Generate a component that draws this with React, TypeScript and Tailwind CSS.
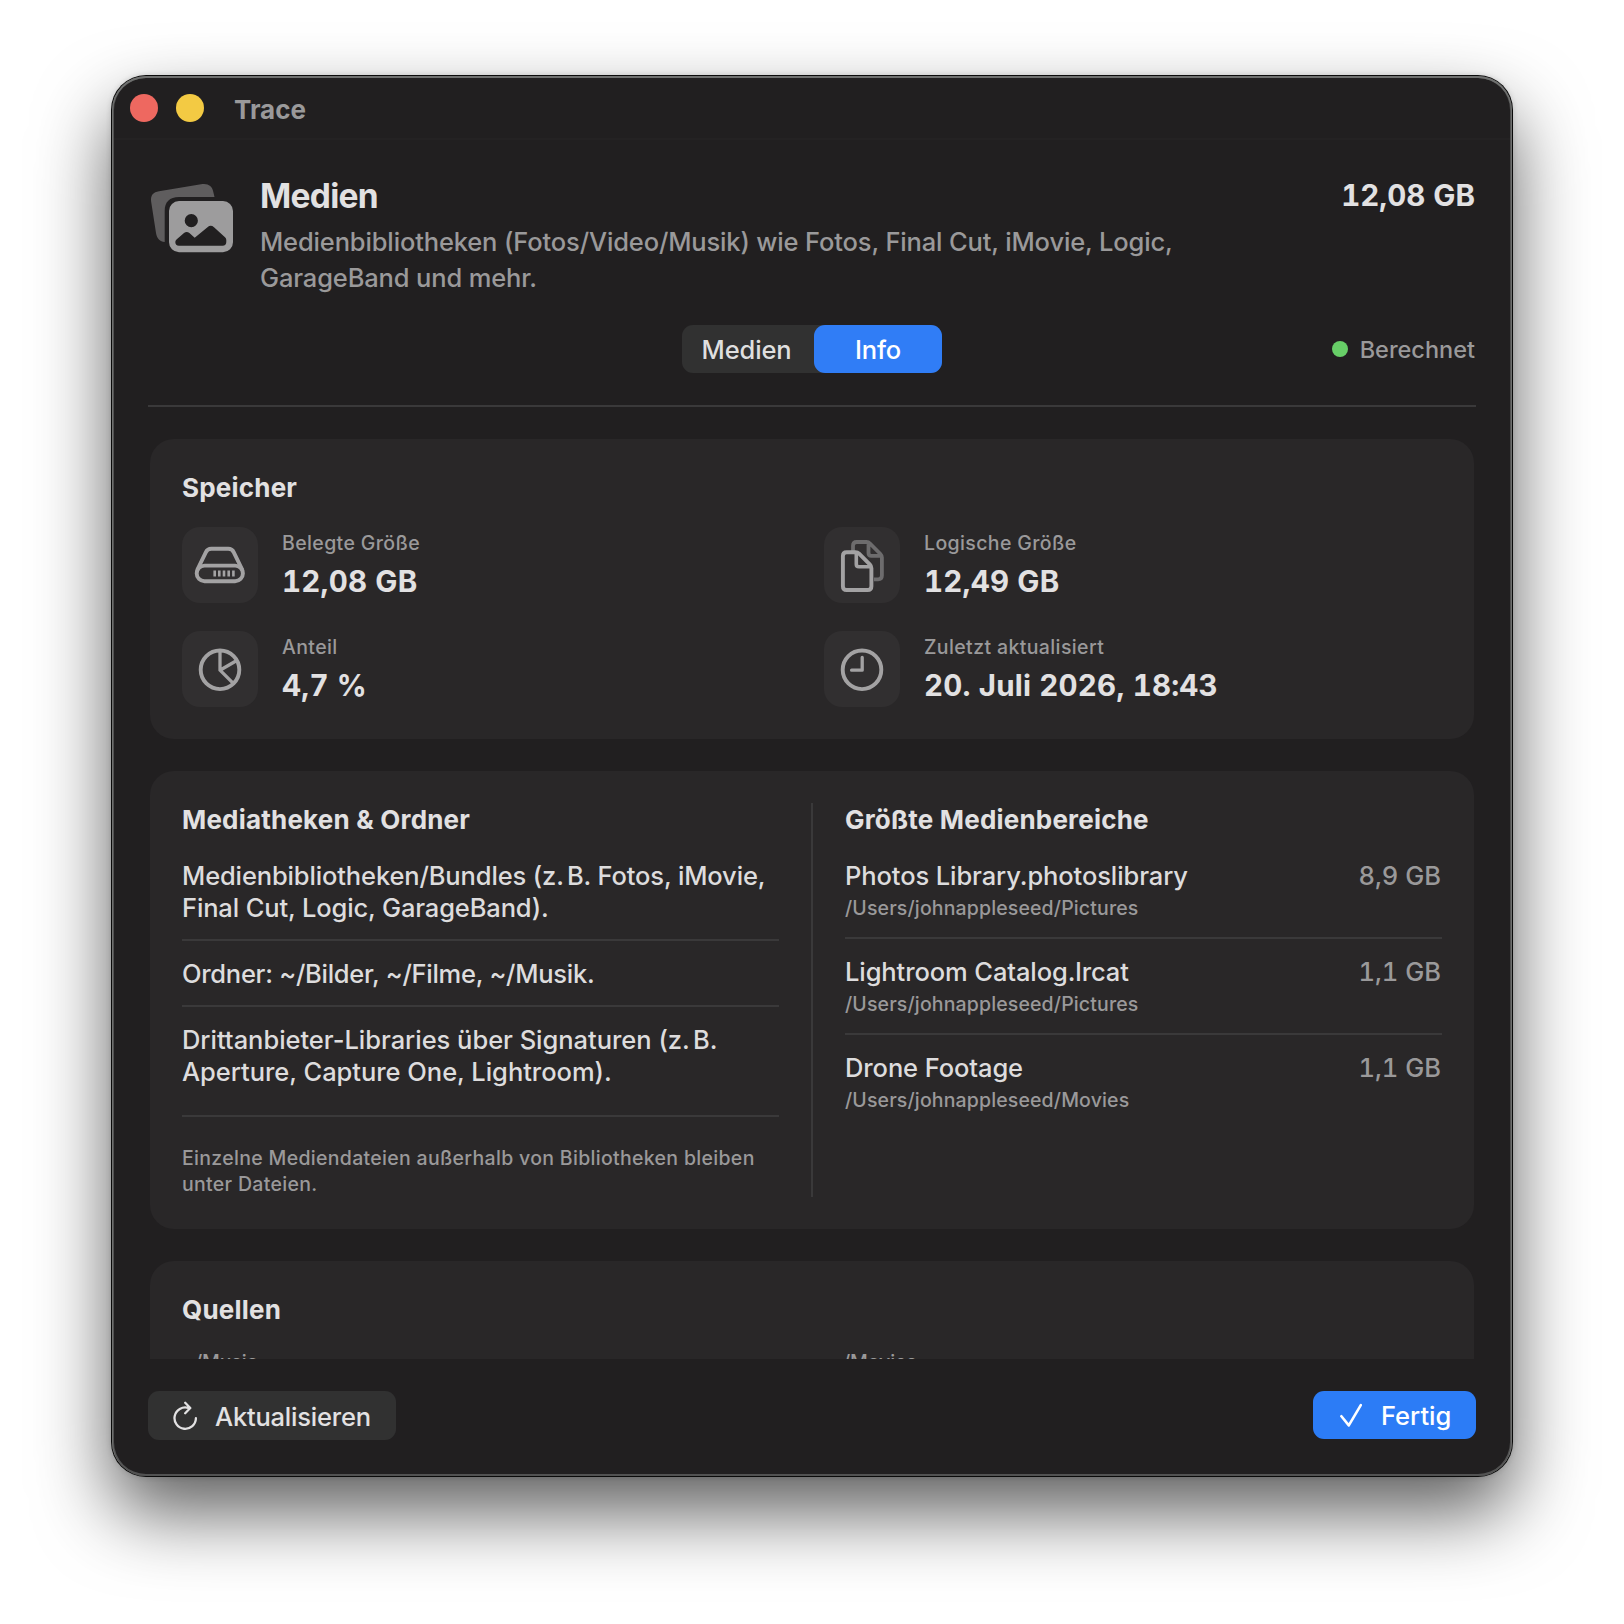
import type { ReactNode } from "react";

const titleStyles =
  "text-[26px] leading-8 font-bold tracking-[0.2px] text-[#e2e1e2] pt-px -mb-px";
const captionStyles = "text-[19.5px] leading-[26px] font-[450] text-[#9a999a]";

const PhotosIcon = () => (
  <svg width="92" height="76" viewBox="0 0 92 76" fill="none">
    <path
      d="M16.7 62C12 61.5 8.9 58.5 8 53L3.2 22C2.2 15 5.5 12 11 11.2L53 4.3C60 3 64 6 65.2 11.5L66.5 17H31C21.5 17 16.7 22 16.7 31Z"
      fill="#5f5d5e"
    />
    <path
      fillRule="evenodd"
      d="M31 21H75A10 10 0 0 1 85 31V62.3A10 10 0 0 1 75 72.3H31A10 10 0 0 1 21 62.3V31A10 10 0 0 1 31 21ZM43.3 34.1A6.6 6.6 0 1 0 43.3 47.3A6.6 6.6 0 1 0 43.3 34.1ZM31 65.7H74.5Q78.3 65.7 78.3 62V60Q78.3 58.5 77 57.2L66 47.2Q62.7 44.5 59.5 47.2L46.7 57.7L41.4 53Q38.7 50.8 36 53L28.5 59.4Q27.3 60.5 27.3 62Q27.3 65.7 31 65.7Z"
      fill="#9d9c9d"
    />
  </svg>
);

const DriveIcon = () => (
  <svg width="76" height="76" viewBox="0 0 76 76" fill="none" stroke="#a3a2a3">
    <rect x="14.7" y="38.6" width="46.2" height="15.6" rx="7.8" strokeWidth="3.9" />
    <path
      d="M15.2 43L23.8 25.3Q25.5 21.8 29.3 21.8H46.3Q50.1 21.8 51.8 25.3L60.4 43"
      strokeWidth="3.9"
    />
    <path
      d="M32.7 43.4V49.4M37.3 43.4V49.4M42 43.4V49.4M46.7 43.4V49.4M51.4 43.4V49.4"
      strokeWidth="2.6"
    />
  </svg>
);

const PieIcon = () => (
  <svg width="76" height="76" viewBox="0 0 76 76" fill="none" stroke="#a3a2a3" strokeWidth="3.9">
    <circle cx="38" cy="38.8" r="19.3" />
    <path d="M38 19.5V39.2L51.5 52.6M38 39.2L54.8 29.5" strokeWidth="3.3" strokeLinejoin="round" />
  </svg>
);

const DocsIcon = () => (
  <svg width="76" height="76" viewBox="0 0 76 76" fill="none" strokeLinejoin="round">
    <path
      d="M29 24V18.8Q29 15 32.7 15H42.5Q44.5 15 46 16.5L56.4 27Q57.9 28.5 57.9 30.6V48.5Q57.9 52.3 54.1 52.3H50M44.5 15.5V26Q44.5 28.9 47.4 28.9H57.5"
      stroke="#6d6c6d"
      strokeWidth="3.8"
    />
    <path
      d="M22.6 25.2H31.5Q33.6 25.2 35.1 26.7L46 37.6Q47.4 39 47.4 41.2V59.2Q47.4 63 43.6 63H22.6Q18.9 63 18.9 59.2V29Q18.9 25.2 22.6 25.2Z"
      stroke="#a3a2a3"
      strokeWidth="3.9"
    />
    <path d="M32.3 26V37.2Q32.3 39.8 34.9 39.8H46.5" stroke="#a3a2a3" strokeWidth="3.6" />
  </svg>
);

const ClockIcon = () => (
  <svg
    width="76"
    height="76"
    viewBox="0 0 76 76"
    fill="none"
    stroke="#a3a2a3"
    strokeLinecap="round"
    strokeLinejoin="round"
  >
    <circle cx="38" cy="38.8" r="19.3" strokeWidth="3.9" />
    <path d="M38.2 26.5V39.2H27.6" strokeWidth="3.3" />
  </svg>
);

const stats = [
  { label: "Belegte Größe", value: "12,08 GB", icon: <DriveIcon /> },
  { label: "Logische Größe", value: "12,49 GB", icon: <DocsIcon /> },
  { label: "Anteil", value: "4,7 %", icon: <PieIcon /> },
  { label: "Zuletzt aktualisiert", value: "20. Juli 2026, 18:43", icon: <ClockIcon /> },
];

const areas = [
  { name: "Photos Library.photoslibrary", path: "/Users/johnappleseed/Pictures", size: "8,9 GB" },
  { name: "Lightroom Catalog.lrcat", path: "/Users/johnappleseed/Pictures", size: "1,1 GB" },
  { name: "Drone Footage", path: "/Users/johnappleseed/Movies", size: "1,1 GB" },
];

const Card = ({ children }: { children: ReactNode }) => (
  <section className="shrink-0 rounded-[24px] bg-[#292728] p-8">{children}</section>
);

const Divider = () => <div className="h-0.5 w-full bg-[#3a393a]" />;

function Header() {
  return (
    <header className="flex items-start">
      <div className="mt-1 w-28 shrink-0">
        <PhotosIcon />
      </div>
      <div className="flex-1">
        <h1 className="text-[33.5px] leading-10 font-bold tracking-[-0.7px] text-[#e2e1e2]">
          Medien
        </h1>
        <p className="mt-2 text-[25.5px] leading-9 font-[450] tracking-[-0.15px] text-[#9a999a]">
          Medienbibliotheken (Fotos/Video/Musik) wie Fotos, Final Cut, iMovie, Logic,
          <br />
          GarageBand und mehr.
        </p>
      </div>
      <p className="pr-px text-[29.5px] leading-[38px] font-bold tabular-nums text-[#e2e1e2]">
        12,08 GB
      </p>
    </header>
  );
}

function Toolbar() {
  return (
    <div className="mt-[29px] grid grid-cols-[1fr_auto_1fr] items-center">
      <div />
      <div className="flex h-12 rounded-[11px] bg-[#313131] text-[25.5px] leading-[48px] font-[450] tracking-[-0.15px]">
        <button className="w-[132px] pt-0.5 pr-[3px] text-center leading-[46px] text-[#dfdfdf]">
          Medien
        </button>
        <button className="w-32 rounded-[11px] bg-[#307df6] pt-0.5 text-center leading-[46px] text-white">
          Info
        </button>
      </div>
      <div className="flex items-center justify-end gap-3 pr-px text-[23.5px] leading-8 font-[450] text-[#9a999a]">
        <span className="size-4 rounded-full bg-[#67ce67]" />
        <span className="pt-0.5">Berechnet</span>
      </div>
    </div>
  );
}

function StorageCard() {
  return (
    <Card>
      <h2 className={titleStyles}>Speicher</h2>
      <div className="mt-6 grid grid-cols-2 gap-x-6 gap-y-7">
        {stats.map((s) => (
          <div key={s.label} className="flex h-[76px] items-center gap-6">
            <div className="size-[76px] rounded-[18px] bg-[#312f30]">{s.icon}</div>
            <div className="pb-0.5">
              <p className={`${captionStyles} tracking-[0.38px]`}>{s.label}</p>
              <p className="mt-[7px] text-[29.5px] leading-9 font-bold tracking-[0.2px] tabular-nums text-[#e2e1e2]">
                {s.value}
              </p>
            </div>
          </div>
        ))}
      </div>
    </Card>
  );
}

function LibrariesCard() {
  return (
    <Card>
      <div className="flex gap-8">
        <div className="flex-1">
          <h2 className={titleStyles}>Mediatheken &amp; Ordner</h2>
          <div className="mt-6 text-[25.5px] leading-8 font-[450] text-[#dddcdd]">
            <p className="pt-px pb-[15px] tracking-[-0.14px]">
              Medienbibliotheken/Bundles (z.
              <span className="tracking-[-1.2px]">{"\u202f"}</span>B. Fotos, iMovie,
              <br />
              Final Cut, Logic, GarageBand).
            </p>
            <Divider />
            <p className="pt-[17px] pb-[15px] tracking-[-0.28px]">
              Ordner: ~/Bilder, ~/Filme, ~/Musik.
            </p>
            <Divider />
            <p className="pt-[17px] pb-[27px] tracking-[-0.03px]">
              Drittanbieter-Libraries über Signaturen (z.
              <span className="tracking-[-1.2px]">{"\u202f"}</span>B.
              <br />
              Aperture, Capture One, Lightroom).
            </p>
            <Divider />
          </div>
          <p className={`mt-7 ${captionStyles} tracking-[0.31px]`}>
            Einzelne Mediendateien außerhalb von Bibliotheken bleiben
            <br />
            unter Dateien.
          </p>
        </div>
        <div className="w-0.5 bg-[#3a393a]" />
        <div className="flex-1">
          <h2 className={titleStyles}>Größte Medienbereiche</h2>
          <div className="mt-6">
            {areas.map((a, i) => (
              <div key={a.name}>
                {i > 0 && <Divider />}
                <div className={i > 0 ? "pt-[17px] pb-4" : "pt-px pb-4"}>
                  <div className="flex justify-between text-[25.5px] leading-8 font-[450]">
                    <span className="tracking-[-0.1px] text-[#dddcdd]">{a.name}</span>
                    <span className="pr-px tabular-nums text-[#9a999a]">{a.size}</span>
                  </div>
                  <p className={`mt-[3px] ${captionStyles} tracking-[0.14px]`}>{a.path}</p>
                </div>
              </div>
            ))}
          </div>
        </div>
      </div>
    </Card>
  );
}

function SourcesCard() {
  return (
    <Card>
      <h2 className={titleStyles}>Quellen</h2>
      <div className="mt-6 grid grid-cols-2 gap-x-9 text-[19.5px] leading-[26px] font-[450] tracking-[-0.1px] text-[#9a999a]">
        <span>~/Music</span>
        <span>~/Movies</span>
      </div>
    </Card>
  );
}

export default function App() {
  return (
    <div className="flex h-[1624px] w-[1624px] items-start justify-center overflow-hidden bg-white pt-[76px] font-['Inter',sans-serif]">
      <div className="flex h-[1400px] w-[1400px] flex-col rounded-[34px] bg-[#211f20] shadow-[inset_0_1px_0_1px_#6f706f,inset_0_0_0_2px_#525252,0_0_0_1px_#0a0a0a,0_0_6px_rgba(0,0,0,0.2),0_36px_76px_rgba(0,0,0,0.64)]">
        <div className="mx-0.5 flex h-16 shrink-0 items-center border-b-2 border-[#242223] pt-0.5 pl-4">
          <span className="size-7 rounded-full bg-[#ee6860]" />
          <span className="ml-[18px] size-7 rounded-full bg-[#f3ca43]" />
          <span className="ml-[30px] pt-0.5 text-[26px] font-bold text-[#9a999a]">Trace</span>
        </div>
        <main className="flex min-h-0 flex-1 flex-col px-9 pt-9">
          <Header />
          <Toolbar />
          <div className="mt-8">
            <Divider />
          </div>
          <div className="flex h-[952px] shrink-0 flex-col gap-8 overflow-hidden px-0.5 pt-8">
            <StorageCard />
            <LibrariesCard />
            <SourcesCard />
          </div>
          <footer className="mt-8 flex items-start justify-between text-[25.5px] font-[450]">
            <button className="flex h-[49px] w-[248px] items-center rounded-[11px] bg-[#313131] pl-[25px] text-[#e2e1e2]">
              <svg
                width="24"
                height="30"
                viewBox="0 0 24 30"
                fill="none"
                stroke="currentColor"
                strokeWidth="2.3"
                strokeLinecap="round"
                strokeLinejoin="round"
              >
                <path d="M22.9 17.2A10.7 10.7 0 1 1 15.4 6.9M12.2 1.8L17.3 7L12.2 12.2" />
              </svg>
              <span className="ml-[18px] pt-[3px] tracking-[-0.2px]">Aktualisieren</span>
            </button>
            <button className="flex h-12 w-[163px] items-center rounded-[11px] bg-[#2c7cf6] pl-[27px] text-white">
              <svg
                width="22"
                height="24"
                viewBox="0 0 22 24"
                fill="none"
                stroke="currentColor"
                strokeWidth="2.6"
                strokeLinecap="round"
                strokeLinejoin="round"
              >
                <path d="M1.4 13.2L8.8 22.4L20.8 2.2" />
              </svg>
              <span className="ml-[19px] pt-0.5">Fertig</span>
            </button>
          </footer>
        </main>
      </div>
    </div>
  );
}
